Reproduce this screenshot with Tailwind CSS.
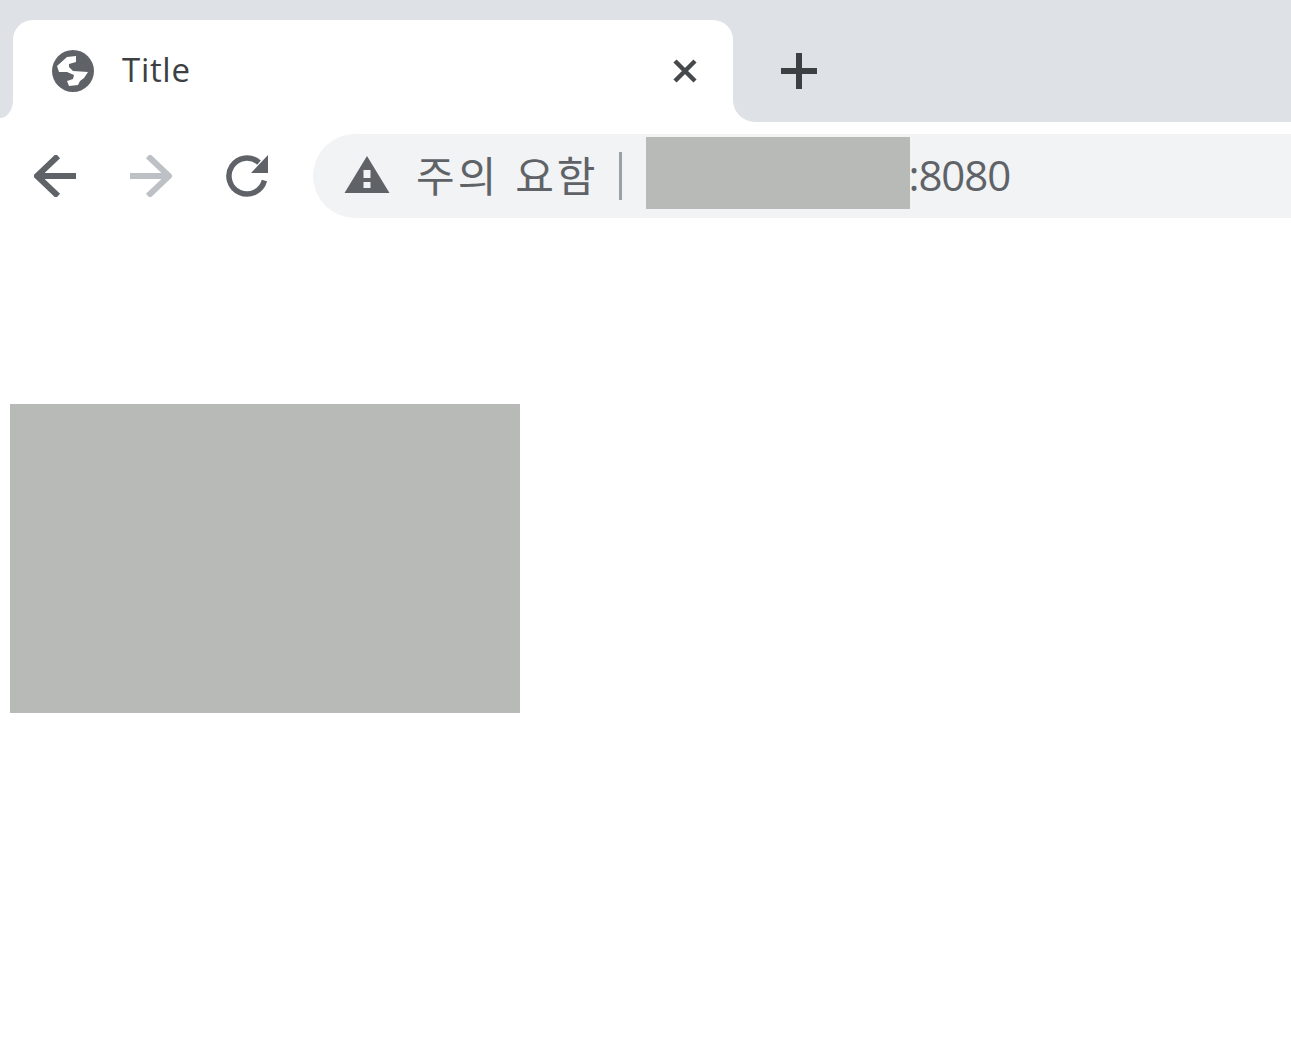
<!DOCTYPE html>
<html>
<head>
    <title>Title</title>
    <script src="https://cdn.jsdelivr.net/npm/@tailwindcss/browser@4"></script>
</head>
<body class="bg-white font-['Open_Sans','Noto_Sans_CJK_KR',sans-serif]">
<div class="h-[122px] bg-[#dee1e6] pt-[20px] pl-[13px] flex items-start">
    <div class="relative w-[720px] h-[102px] bg-white rounded-t-[20px] flex items-center pl-[39px] pr-[36px]">
        <div class="absolute -left-[13px] bottom-0 w-[13px] h-[22px] bg-white">
            <div class="h-[18px] bg-[#dee1e6] rounded-br-[13px_18px]"></div>
        </div>
        <div class="absolute left-full bottom-0 w-[22px] h-[22px] bg-white">
            <div class="h-[22px] bg-[#dee1e6] rounded-bl-[22px]"></div>
        </div>
        <svg class="w-[42px] h-[42px] shrink-0" viewBox="0 0 42 42">
            <circle cx="21" cy="21" r="21" fill="#5f6368"/>
            <path d="M15 7l9-1v6l-7 2v3l4 4 15 1-4 6-4 3-2 4-9 1-2-5 6-2 1-4-7-3H7l-2-6z" fill="#fff"/>
        </svg>
        <span class="ml-[28px] text-[33px] tracking-[0.7px] text-[#3c4043] leading-none flex-1 -mt-[3px]">Title</span>
        <svg class="w-[24px] h-[24px] shrink-0" viewBox="0 0 24 24">
            <path d="M2 2l20 20M22 2l-20 20" stroke="#45494c" stroke-width="4.5" fill="none"/>
        </svg>
    </div>
    <svg class="ml-[48px] mt-[33px] w-[36px] h-[36px] shrink-0" viewBox="0 0 36 36">
        <path d="M18 0v36M0 18h36" stroke="#3c4043" stroke-width="6" fill="none"/>
    </svg>
</div>
<div class="h-[108px] flex items-start pt-[12px] pl-[34px]">
    <svg class="mt-[21px] w-[42px] h-[42px] shrink-0" viewBox="0 0 42 42">
        <path d="M42 21H4M24 1L3 21l21 20" stroke="#5f6368" stroke-width="6" fill="none"/>
    </svg>
    <svg class="ml-[54px] mt-[21px] w-[42px] h-[42px] shrink-0" viewBox="0 0 42 42">
        <path d="M0 21h38M18 1l21 20-21 20" stroke="#bdc1c6" stroke-width="6" fill="none"/>
    </svg>
    <svg class="ml-[54px] mt-[21px] w-[42px] h-[42px] shrink-0" viewBox="0 0 42 42">
        <path d="M33 7.6A18 18 0 1 0 38.4 25.5" stroke="#5f6368" stroke-width="5.5" fill="none"/>
        <path d="M42 0v18H25z" fill="#5f6368"/>
    </svg>
    <div class="ml-[45px] flex-1 h-[84px] bg-[#f1f3f4] rounded-l-[42px] flex items-center pl-[30px]">
        <svg class="w-[48px] h-[38px] shrink-0 mb-[4px]" viewBox="0 0 48 38">
            <path fill-rule="evenodd" d="M24 1l22.500 37H1.500zM20.500 15v8h7v-8zM20.500 27v6h7v-6z" fill="#5f6368"/>
        </svg>
        <span class="ml-[25px] text-[42px] tracking-[3px] [word-spacing:2px] leading-none text-[#5f6368] whitespace-nowrap">주의 요함</span>
        <span class="ml-[21px] w-[3px] h-[48px] bg-[#9aa0a6] shrink-0"></span>
        <span class="relative ml-[24px] w-[264px] h-[72px] bg-[#b8bab7] shrink-0 self-start mt-[3px]"></span>
        <span class="mb-[2px] text-[42px] tracking-[-1.1px] leading-none text-[#5f6368] -ml-[2px]">:8080</span>
    </div>
</div>
<div class="pt-[174px] pl-[10px]">
    <div class="w-[510px] h-[309px] bg-[#b8bab7]"></div>
</div>
</body>
</html>
